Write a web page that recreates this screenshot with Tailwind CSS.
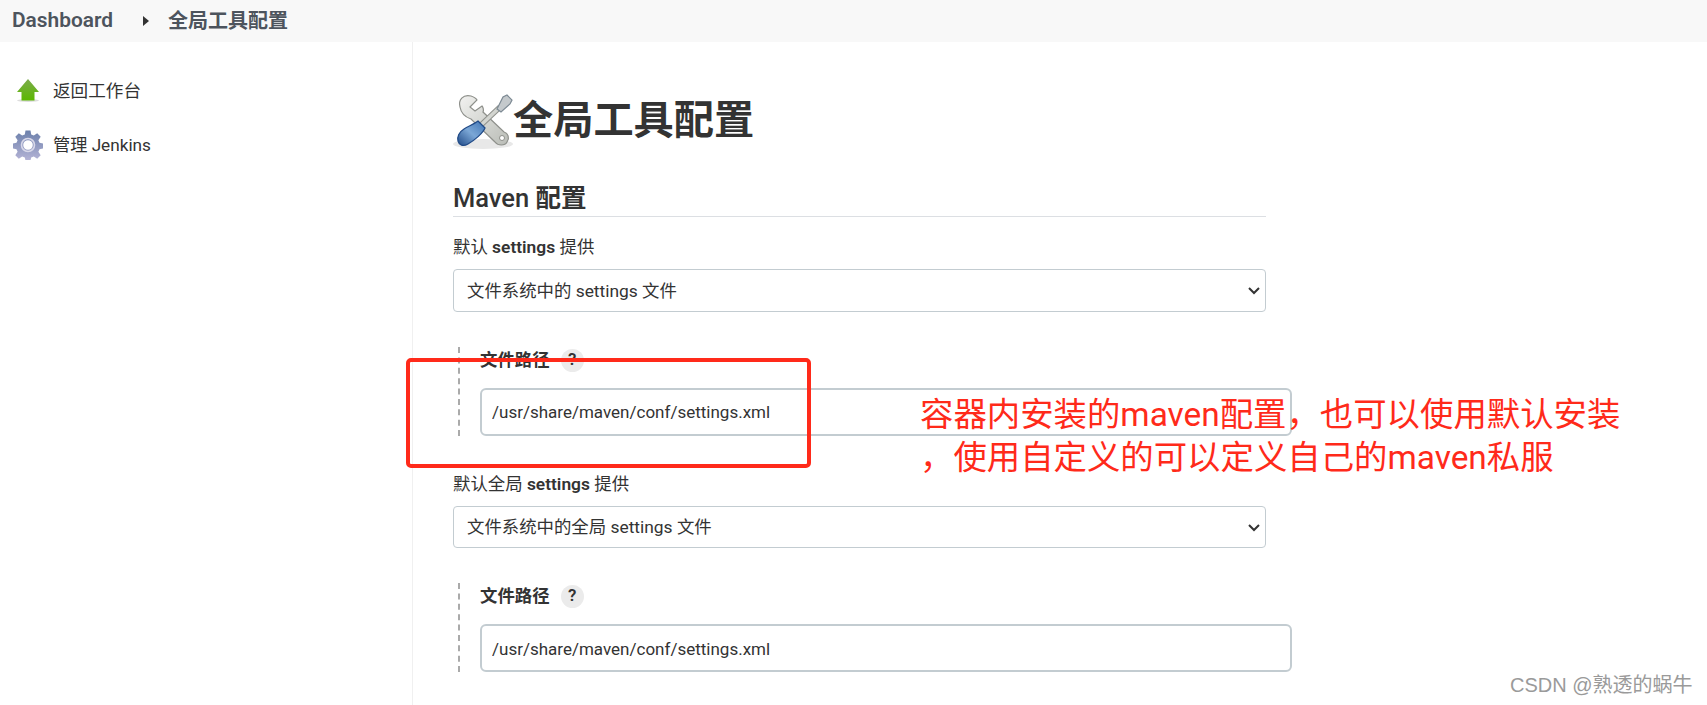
<!DOCTYPE html>
<html lang="zh-CN">
<head>
    <meta charset="UTF-8">
    <title>全局工具配置</title>
    <script src="https://cdn.jsdelivr.net/npm/@tailwindcss/browser@4"></script>
</head>
<body class="relative h-[705px] overflow-hidden bg-white text-[#333] font-['Roboto','Noto_Sans_CJK_SC',sans-serif] text-[16px]">
    <!-- breadcrumb -->
    <div class="flex items-center h-[42px] bg-[#f8f8f8] text-[#4d545d] font-semibold text-[20px]">
        <span class="ml-3 text-[20.9px]">Dashboard</span>
        <svg class="ml-[30px] w-[6px] h-[10px]" viewBox="0 0 6 10"><path d="M0 0l6 5-6 5z" fill="#333"/></svg>
        <span class="ml-[19px]">全局工具配置</span>
    </div>

    <div class="flex h-[663px]">
        <!-- side panel -->
        <div class="w-[413px] shrink-0 border-r border-[#f0f0f0] pt-[33px] pl-[13px]">
            <div class="flex items-center h-[32px]">
                <svg class="-mt-[2px] ml-[3px] w-[24px] h-[24px]" viewBox="0 0 24 24">
                    <defs>
                        <linearGradient id="up" x1="0" y1="0" x2="0" y2="1"><stop offset="0" stop-color="#7cab4c"/><stop offset="1" stop-color="#5cb800"/></linearGradient>
                    </defs>
                    <ellipse cx="12" cy="22.5" rx="11" ry="1.5" fill="#ddd"/>
                    <path d="M12 1L23 14H18.5V22.5H5.5V14H1z" fill="url(#up)"/>
                </svg>
                <span class="ml-[13px] text-[17.6px] text-[#333]">返回工作台</span>
            </div>
            <div class="flex items-center h-[32px] mt-[23px]">
                <svg class="-mt-[2px] w-[30px] h-[30px]" viewBox="0 0 30 30">
                    <defs>
                        <linearGradient id="gear" x1="0" y1="0" x2="0" y2="1"><stop offset="0" stop-color="#6c80ab"/><stop offset="1" stop-color="#b5b4d6"/></linearGradient>
                    </defs>
                    <path fill="url(#gear)" fill-rule="evenodd" d="M12.5 0.5h5l.7 4 2.6 1.1 3.4-2.3 3.5 3.5-2.3 3.4 1.1 2.6 4 .7v5l-4 .7-1.1 2.6 2.3 3.4-3.5 3.5-3.4-2.3-2.6 1.1-.7 3h-5l-.7-3-2.6-1.1-3.4 2.3-3.5-3.5 2.3-3.4-1.1-2.6-4-.7v-5l4-.7 1.1-2.6-2.3-3.4 3.5-3.5 3.4 2.3 2.6-1.1zM15 10.2a4.8 4.8 0 1 0 0 9.6 4.8 4.8 0 0 0 0-9.6z"/>
                    <circle cx="15" cy="15" r="6.5" fill="none" stroke="#d9d9ea" stroke-width="1.6"/>
                </svg>
                <span class="ml-[10px] text-[17.2px] text-[#333]">管理 Jenkins</span>
            </div>
        </div>

        <!-- main form -->
        <div class="pl-[40px] w-[880px]">
            <div class="flex items-center mt-[46px] h-[66px]">
                <svg class="-ml-[3px] w-[66px] h-[66px] shrink-0" viewBox="0 0 66 66">
                    <defs>
                        <linearGradient id="steel" x1="0" y1="0" x2="1" y2="1"><stop offset="0" stop-color="#f2f2f0"/><stop offset="1" stop-color="#b9bcb6"/></linearGradient>
                        <linearGradient id="handle" x1="1" y1="0" x2="0" y2="1"><stop offset="0" stop-color="#3f74b4"/><stop offset="0.5" stop-color="#7ba7d6"/><stop offset="1" stop-color="#204a87"/></linearGradient>
                    </defs>
                    <ellipse cx="33" cy="56" rx="30" ry="5" fill="#e8e8e8"/>
                    <path d="M21 8C13 6 8 12 10 19C11 25 15 29 21 31L45 54C48 58 55 58 57 54C60 50 58 45 54 44L33 24C34 22 33 19 32 18L25 23L20 19L27 12C26 10 24 9 21 8Z" fill="url(#steel)" stroke="#8e908b" stroke-width="1.2"/>
                    <circle cx="52" cy="50" r="2.5" fill="#fff" stroke="#8e908b"/>
                    <path d="M31 37L50 19" stroke="#8e908b" stroke-width="5.5"/>
                    <path d="M31 37L50 19" stroke="#d3d5d0" stroke-width="3.5"/>
                    <path d="M47 21L53 9L57 7L62 12L60 16L51 24Z" fill="#c4c9cc" stroke="#7d8a94" stroke-width="1.2"/>
                    <path d="M28 33L35 40C33 45 25 52 18 56C13 59 9 57 8 53C7 49 9 44 14 41C19 38 24 36 28 33Z" fill="url(#handle)" stroke="#204a87" stroke-width="1.2"/>
                </svg>
                <h1 class="text-[40.2px] font-bold text-[#333] -ml-[3px]">全局工具配置</h1>
            </div>

            <div class="mt-[28px] h-[35px] w-[813px] border-b border-[#dcdfe3] text-[25.5px] leading-[32px] font-medium text-[#333]">Maven <span class="font-semibold">配置</span></div>

            <div class="mt-[17px] h-[26px] leading-[26px] text-[17.4px]">默认 <span class="font-semibold">settings</span> 提供</div>
            <div class="relative mt-[9px] w-[813px]">
                <select class="appearance-none w-full h-[43px] pl-[13px] pt-px border border-[#c3ccd1] rounded-[4px] bg-white text-[17.4px] text-[#333]"><option>文件系统中的 settings 文件</option></select>
                <svg class="absolute right-[6px] top-[18px] w-[12px] h-[8px]" viewBox="0 0 12 8"><path d="M1 1l5 5 5-5" fill="none" stroke="#333" stroke-width="2"/></svg>
            </div>

            <div class="mt-[35px] ml-[5px] pl-[20px] border-l-2 border-dashed border-[#aaa] h-[89px] w-[834px]">
                <div class="flex items-center h-[26px]">
                    <span class="text-[17.4px] font-bold">文件路径</span>
                    <span class="ml-[11px] w-[23px] h-[23px] rounded-full bg-[#ebebeb] flex items-center justify-center text-[17px] font-semibold">?</span>
                </div>
                <input type="text" value="/usr/share/maven/conf/settings.xml" class="mt-[15px] w-full h-[48px] px-[10px] border-2 border-[#c3ccd1] rounded-[6px] text-[17px] text-[#333] bg-white">
            </div>

            <div class="mt-[35px] h-[26px] leading-[26px] text-[17.4px]">默认全局 <span class="font-semibold">settings</span> 提供</div>
            <div class="relative mt-[9px] w-[813px]">
                <select class="appearance-none w-full h-[42px] pl-[13px] pt-px border border-[#c3ccd1] rounded-[4px] bg-white text-[17.4px] text-[#333]"><option>文件系统中的全局 settings 文件</option></select>
                <svg class="absolute right-[6px] top-[18px] w-[12px] h-[8px]" viewBox="0 0 12 8"><path d="M1 1l5 5 5-5" fill="none" stroke="#333" stroke-width="2"/></svg>
            </div>

            <div class="mt-[35px] ml-[5px] pl-[20px] border-l-2 border-dashed border-[#aaa] h-[89px] w-[834px]">
                <div class="flex items-center h-[26px]">
                    <span class="text-[17.4px] font-bold">文件路径</span>
                    <span class="ml-[11px] w-[23px] h-[23px] rounded-full bg-[#ebebeb] flex items-center justify-center text-[17px] font-semibold">?</span>
                </div>
                <input type="text" value="/usr/share/maven/conf/settings.xml" class="mt-[15px] w-full h-[48px] px-[10px] pt-[2px] border-2 border-[#c3ccd1] rounded-[6px] text-[17px] text-[#333] bg-white">
            </div>
        </div>
    </div>

    <!-- annotation drawn over the page -->
    <div class="absolute left-[406px] top-[358px] w-[405px] h-[110px] border-4 border-[#ff2a1a] rounded-[5px]"></div>
    <div class="absolute left-[920px] top-[393px] w-[740px] text-[33.4px] leading-[43px] text-[#ff2a1a]">容器内安装的maven配置，也可以使用默认安装<br>，使用自定义的可以定义自己的maven私服</div>
    <div class="absolute left-[1510px] top-[671px] text-[20px] leading-[28px] text-[#9a9a9a] whitespace-nowrap font-['Liberation_Sans','Noto_Sans_CJK_SC',sans-serif]">CSDN @熟透的蜗牛</div>
</body>
</html>
